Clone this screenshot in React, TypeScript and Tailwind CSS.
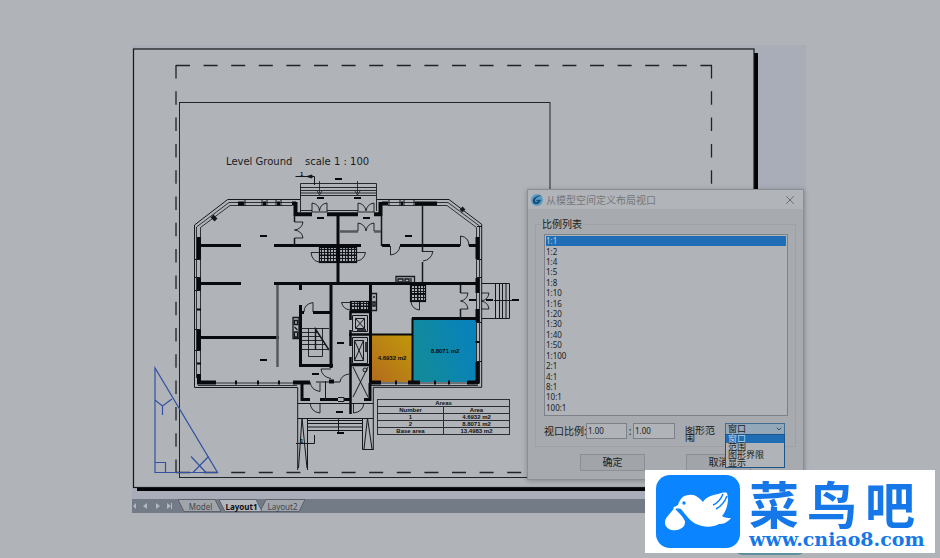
import React, { useState } from 'react';
import { ChevronDown, X } from 'lucide-react';

const SCALES = [
  '1:1', '1:2', '1:4', '1:5', '1:8', '1:10', '1:16', '1:20', '1:30',
  '1:40', '1:50', '1:100', '2:1', '4:1', '8:1', '10:1', '100:1',
];

const EXTENTS = ['窗口', '范围', '图形界限', '显示'];

const AREAS = [
  ['1', '4.6932 m2'],
  ['2', '8.8071 m2'],
  ['Base area', '13.4983 m2'],
];

// room tags, drawn as short bars at this zoom level
const TAGS = [
  [263, 236], [263, 360], [338, 179], [320, 198], [320, 218], [357, 198], [366, 218], [408, 236],
  [472, 300], [489, 300], [515, 300], [340, 343], [315, 374], [339, 412], [340, 433],
];

function Tile({ x, y, w, h }: { x: number; y: number; w: number; h: number }) {
  return (
    <g>
      <rect x={x} y={y} width={w} height={h} fill="url(#tiles)" stroke="#0a0c10" strokeWidth="1.2" />
      <path d={`M${x + w / 2} ${y}v${h}M${x} ${y + h / 2}h${w}`} stroke="#0a0c10" strokeWidth="1" />
    </g>
  );
}

function FloorPlan() {
  return (
    <g fill="none" stroke="#15181c" strokeWidth="1">
      {/* outer outline and window lines */}
      <path d="M300 199.500H227.700L194.500 225V387.500H297.700V470M376.700 199.500H449L481.700 224.300V387.300H373.300V450" />
      <path
        d="M292 202.500H229L196.500 227V378M292 205.500H230L200.500 227.500V378M382 202.500H448L479.500 226V383M388 205.500H447L476.500 227.500V383M198 383H297M198 385.500H297M371 383H478M371 385.500H478"
        stroke="#1e2126"
        strokeWidth="0.9"
      />
      {/* window mullions */}
      <path d="M245 200v6M262 200v6M267 200v6M276 200v6M281 200v6M389 200v6M400 200v6M404 200v6M414 200v6M195 259.500h6M195 277.500h6M195 290.500h6M195 329.500h6M195 350.500h6M477 226.500h5M477 259.500h5M477 277.500h5M477 322.500h5M477 361.500h5" />
      <path d="M212 216l4 4M461 211l3-3" strokeWidth="4" />

      {/* facade walls */}
      <g stroke="#080a0d" strokeWidth="4">
        <path d="M199 237V259M199 278V290M199 330V350M199 374V384" />
        <path d="M238 203.500h6M263 203.500h3M277 203.500h3M382 203.500h6M401 203.500h2M415 203.500h22" />
        <path d="M292 203.500h4M295.500 202V216M294 214.300H312M327 214.300H358M374 214.300H382M380.500 202V216" />
        <path d="M477.500 237V259M477.500 278V293M477.500 309V322M477.500 341V343M477.500 362V384" />
        <path d="M197 382.500H216M235 382.500h2M257 382.500h2M278 382.500h2M293 382.500H310M370 382.500H381M395 382.500h2M408 382.500H420M434 382.500h2M448 382.500h2M467 382.500H478" />
        <path d="M197 309.500h4M197 363.500h4" strokeWidth="2" />
        <path d="M302 383V401M301 399.500H310M320 399.500H338M344 399.500H351M364 399.500H371M370 383V401" strokeWidth="3" />
      </g>

      {/* inner walls */}
      <g stroke="#080a0d" strokeWidth="3">
        <path d="M201 245.500H241M274 245.500H361M382 245.500H390M400 245.500H460M469 245.500H477" />
        <path d="M201 283.500H241M274 283.500H479" />
        <path d="M338 216V284M370.500 284V384M331 284V368M300.500 284V290M300.500 305V366M299 365.500H333" />
        <path d="M201 337.500H279M299 312.500H304M313 312.500H331M412 318.500H478" />
        <path d="M350.500 311V320M350.500 330V346M350.500 357V414M350 312H370M349 334.500H370M350 365H370" strokeWidth="2.500" />
        <path d="M370 334.500H412M412.500 318V384" strokeWidth="2" />
        <path d="M329 381.500h5" strokeWidth="4" />
      </g>
      <path d="M381.500 216V246M422.500 206V252M422.500 262V283M294.500 215V222M294.500 238V246M460.500 285V293M460.500 309V319" strokeWidth="1.500" />
      <path d="M277.500 285V367M340 231.500H358M374 231.500H381" stroke="#55595f" strokeWidth="2.500" />
      <path d="M325.500 381V400M316 382H330M334 382H340M338 397.500h6v4h-6" />

      {/* doors */}
      <g strokeWidth="0.900">
        <path d="M294.500 222H303M303 222Q302 229 294.500 230Q302 231 303 238M303 238H294.500" />
        <path d="M312 212V203Q319 204 319.500 211Q320 204 327 203V212M312 212H327" />
        <path d="M358 212V203Q365 204 366 211Q367 204 374 203V212M358 212H374" />
        <path d="M358 231V223Q365 224 366 231Q367 224 374 223V231" />
        <path d="M390.500 246V255Q399 254 400 246M460.500 246V236Q469 237 469 246M423 251.500H433Q431 260 423 261" />
        <path d="M319 252.500H311Q312 261 319 262M357 252.500H365.500Q364 260 357 261M350 302.500H341.500Q343 309 350 310" />
        <path d="M313 312V302.500Q304 304 304 312M419.500 302V310Q412 309 411 302M331 369H321Q322 377 331 378.500M340 382Q341 375 349 374" />
        <path d="M460.500 293H468Q467 300 460.500 301Q467 302 468 309H460.500M481 293H489Q488 300 481 301Q488 302 489 309H481" />
        <path d="M320 383V391.500Q311 390 310 382M320 403V413Q311 412 310 403M353.500 403V413Q363 412 364 403" />
      </g>

      {/* front and rear steps */}
      <path d="M300.500 212V183.500H376.500V211M300 187.500H376M300 190.500H376M300 193H376M300 195.500H376M300 210.500H312M327 210.500H358" strokeWidth="0.900" />
      <path d="M319.500 181V193M317 191l2.500 4 2.500-4M357.500 181V193M355 191l2.500 4 2.500-4" strokeWidth="0.800" />
      <path d="M482 283.500H509.500V318.500H482M495.500 284V318M499.500 284V318M502.500 284V318M506 284V318M494 300.500H512" />
      <path d="M297.500 403.500H373M297.500 418.500H373M308 420.500H362M308 423.500H362M308 427H362M308 430.500H362M338.500 418V433" />
      <path d="M307.500 418V470M302 418L298.500 468M302 418L307 468M362.500 418V449.500H373.500M367.500 418L364 449M367.500 418L372 449" />
      <path d="M295.500 176.500H314.500V185M305 176.500h7M296 443.500H314.500V435" />
      <path d="M307 176.500l5-1.500v3z" fill="#15181c" />

      {/* staircase */}
      <path d="M301 328.500H329M301 332.500H318M301 336.500H320M301 340.500H323M301 344.500H326M301 349.500H329M308.500 328V356.500H322.500V328" strokeWidth="0.900" />
      <path d="M315.500 328V350L315.500 329L329 350" strokeWidth="1.400" />

      {/* lifts */}
      <path d="M352.500 315.500h15v16h-15zM355.500 318.500h9v10h-9zM355.500 318.500l9 10M364.500 318.500l-9 10M352.500 337.500h15v26h-15zM354.500 340.500h9v20h-9zM354.500 340.500l9 20M363.500 340.500l-9 20M353 367l15 30M368 367l-15 30" />
      <circle cx="365" cy="370" r="2" />
      <path d="M366 342v10M357 330h9" stroke="#30343a" strokeWidth="2" />

      {/* kitchens and bathrooms */}
      <Tile x={319.500} y={247.500} w={17} h={15} />
      <Tile x={339.500} y={247.500} w={17} h={15} />
      <Tile x={410.500} y={285.500} w={15} h={16} />
      <Tile x={350.500} y={301.500} w={18} h={9} />
      <path d="M396 283V276.500H414.500V283M398 279h5v3h-5zM405 279h4v3h-4zM411 278v4M371.500 293.500h5v17h-5zM373 297h2M373 302h2v4h-2zM293 317.500h6v21h-6zM294.500 320.500h3v4h-3zM294.500 327l3 3M294.500 332h3v5h-3z" strokeWidth="1.300" />

      {TAGS.map(([x, y]) => (
        <path key={`${x}-${y}`} d={`M${x - 3} ${y}h7`} stroke="#080a0d" strokeWidth="2" />
      ))}
    </g>
  );
}

function PaperSheet() {
  return (
    <svg viewBox="132 45 674 454" className="block h-auto w-full" role="img" aria-label="Level Ground">
      <defs>
        <linearGradient id="amber" x1="0" y1="1" x2="1" y2="0">
          <stop offset="0" stopColor="#b36a1d" />
          <stop offset="1" stopColor="#c0990a" />
        </linearGradient>
        <linearGradient id="cyan" x1="0" y1="0.300" x2="1" y2="0">
          <stop offset="0" stopColor="#128a9c" />
          <stop offset="1" stopColor="#0681bf" />
        </linearGradient>
        <pattern id="tiles" width="3" height="3" patternUnits="userSpaceOnUse">
          <path d="M0 0.500H3M0.500 0V3" stroke="#15181c" strokeWidth="1.100" />
        </pattern>
      </defs>

      <rect x="132" y="45" width="674" height="454" fill="#a9adb8" />
      <path d="M754 53H758V491H137V488H754z" fill="#020306" />
      <rect x="133.500" y="49" width="620.500" height="438.500" fill="#b0b4b9" stroke="#16181c" strokeWidth="1.200" />

      <g fill="none" stroke="#202327">
        <path d="M176 65.500H712M176 472.500H712" strokeDasharray="14 13.600" strokeWidth="1.300" />
        <path d="M176 65V472M711.500 65V472" strokeDasharray="13.500 12.800" strokeWidth="1.300" />
        <rect x="179.500" y="102.500" width="370.500" height="375" />
      </g>

      <g fill="none" stroke="#3351a3" strokeWidth="1.200">
        <path d="M155 368V472.500H217.500zM155 462.500H165.500V472.500" />
        <path d="M155 400L162.500 406L172 399M162.500 406V415M191 456.500L206 472.500M208.500 456.500L193 472.500" />
      </g>

      <rect x="371" y="335" width="42" height="47" fill="url(#amber)" />
      <rect x="413" y="319" width="63" height="63" fill="url(#cyan)" />
      <FloorPlan />

      <g fill="#1a1c22" fontFamily="'DejaVu Sans', sans-serif" fontSize="10">
        <text x="226" y="165">Level Ground</text>
        <text x="305" y="165">scale 1 : 100</text>
      </g>
      <g fill="#0a0c10" fontFamily="'Liberation Sans', sans-serif" fontSize="6" fontWeight="700">
        <text x="392" y="360" textAnchor="middle">4.6932 m2</text>
        <text x="445" y="353" textAnchor="middle">8.8071 m2</text>
        <text x="300" y="176">1</text>
        <text x="300" y="443">1</text>
      </g>
    </svg>
  );
}

function AreaTable() {
  return (
    <table className="absolute left-[245px] top-[354px] w-[133px] table-fixed border-collapse text-center font-['Liberation_Sans',sans-serif] text-[6px] font-bold leading-[6px] text-[#0f1115] [&_td]:border [&_td]:border-[#2b2e33] [&_td]:p-0 [&_th]:border [&_th]:border-[#2b2e33] [&_th]:p-0">
      <thead>
        <tr><th colSpan={2}>Areas</th></tr>
        <tr><th>Number</th><th>Area</th></tr>
      </thead>
      <tbody>
        {AREAS.map(([name, area]) => (
          <tr key={name}><td>{name}</td><td>{area}</td></tr>
        ))}
      </tbody>
    </table>
  );
}

function LayoutTabs() {
  const [active, setActive] = useState('Layout1');

  return (
    <nav className="flex h-[14px] items-stretch bg-[#737b87] font-['Noto_Sans',sans-serif] text-[8px] leading-[13px]">
      <svg width="46" height="14" viewBox="0 0 46 14" fill="#b4b9c1" className="shrink-0" aria-hidden="true">
        <path d="M4 4v6L1 7zM15 4v6l-4-3zM24 4v6l4-3zM35 4v6l4-3zM39 4h1v6h-1z" />
      </svg>
      {['Model', 'Layout1', 'Layout2'].map((tab) => (
        <button
          key={tab}
          onClick={() => setActive(tab)}
          className={`relative -mr-1 flex w-[45px] items-center justify-center ${active === tab ? 'z-10 font-bold text-[#0c0e12]' : 'text-[#42474f]'}`}
        >
          <svg viewBox="0 0 45 14" preserveAspectRatio="none" className="absolute inset-0 h-full w-full" aria-hidden="true">
            <path
              d={tab === 'Layout2' ? 'M6 0.500H45L39 12.500H0z' : 'M0 0.500H37L43 12.500H6z'}
              fill={active === tab ? '#b3b7bd' : '#a0a5ac'}
              stroke="#52575f"
              strokeWidth="0.800"
            />
          </svg>
          <span className="relative">{tab}</span>
        </button>
      ))}
    </nav>
  );
}

function ViewportDialog() {
  const [scale, setScale] = useState('1:1');
  const [extent, setExtent] = useState('窗口');

  return (
    <div
      role="dialog"
      aria-labelledby="dialog-title"
      className="absolute right-[2px] top-[144px] w-[277px] border border-[#8b8f95] bg-[#a7aaaf] font-['Noto_Sans','Noto_Sans_CJK_SC',sans-serif] text-[10px] text-[#1b1d21] shadow-[0_1px_5px_rgba(0,0,0,0.25)]"
    >
      <header className="flex h-[19px] items-center bg-[#b1b4b8] pl-[3px] pr-[6px]">
        <svg width="12" height="12" viewBox="0 0 12 12" aria-hidden="true">
          <circle cx="6" cy="6" r="6" fill="#5b9cc0" />
          <path d="M10.500 1.500C6 1 2 3.500 1.800 6.800c-.2 2.800 2.400 3.800 4.700 3.200C8.500 9.400 9.600 7.600 10 5.800H5.600L5 7.200h2.400C6.500 8.600 4 8.700 4 6.600 4 4.200 7 2.600 10.500 1.500z" fill="#124b7c" />
        </svg>
        <h2 id="dialog-title" className="ml-[3px] leading-[14px] text-[#74777c]">从模型空间定义布局视口</h2>
        <button aria-label="关闭" className="ml-auto text-[#606368]">
          <X size={14} strokeWidth={1.5} />
        </button>
      </header>

      <div className="px-[7px] pb-2 pt-2">
        <fieldset className="border border-[#9da0a5] px-[5px] pb-[7px]">
          <legend className="px-px leading-[14px]">比例列表</legend>

          <ul
            role="listbox"
            aria-label="比例列表"
            className="ml-[3px] mr-[2px] mt-[3px] grid h-[182px] auto-rows-fr border border-[#7b8089] bg-[#b0b3b8] px-px pb-[2px] pt-px text-[8px] leading-[10px]"
          >
            {SCALES.map((s) => (
              <li
                key={s}
                role="option"
                aria-selected={s === scale}
                onClick={() => setScale(s)}
                className={`flex items-center ${s === scale ? 'bg-[#1f6db5] text-[#b9d3ea]' : ''}`}
              >
                {s}
              </li>
            ))}
          </ul>

          <div className="ml-[3px] mr-[5px] mt-[7px] flex h-4">
            <label htmlFor="ratio-a" className="w-[42px] shrink-0 whitespace-nowrap leading-4">视口比例:</label>
            <input id="ratio-a" defaultValue="1.00" className="w-[41px] border border-[#7b8089] bg-[#b0b3b8] px-px text-[8px]" />
            <label htmlFor="ratio-b" className="w-[6px] shrink-0 text-center leading-4">:</label>
            <input id="ratio-b" defaultValue="1.00" className="w-[42px] border border-[#7b8089] bg-[#b0b3b8] px-px text-[8px]" />
            <label htmlFor="extent" className="ml-[10px] mt-[3px] h-4 w-8 shrink-0 overflow-hidden leading-[9px]">图形范围</label>
            <div className="relative ml-auto w-[60px] text-[9px]">
              <select
                id="extent"
                value={extent}
                onChange={(e) => setExtent(e.target.value)}
                className="block h-3 w-full appearance-none border border-[#3f6f96] bg-[#93a9b9] pl-[2px] leading-[10px]"
              >
                {EXTENTS.map((name) => <option key={name}>{name}</option>)}
              </select>
              <ChevronDown size={8} className="pointer-events-none absolute right-[2px] top-[2px]" />
              <ul className="absolute left-0 top-[11px] z-10 w-full border border-[#1d5588] bg-[#b0b3b8] leading-[8px]">
                {EXTENTS.map((name) => (
                  <li
                    key={name}
                    onClick={() => setExtent(name)}
                    className={`h-2 pl-[2px] ${name === extent ? 'bg-[#1f6db5] text-[#b9d3ea]' : ''}`}
                  >
                    {name}
                  </li>
                ))}
              </ul>
            </div>
          </div>
        </fieldset>

        <div className="mt-[7px] flex justify-center gap-[41px]">
          <button className="h-[17px] w-[65px] border border-[#8b8f95] bg-[#a1a4a9] leading-[15px]">确定</button>
          <button className="h-[17px] w-[65px] border border-[#8b8f95] bg-[#a1a4a9] leading-[15px]">取消</button>
        </div>
      </div>
    </div>
  );
}

function SiteBadge() {
  return (
    <a
      href="#"
      className="absolute bottom-[5px] right-[5px] flex h-[83px] w-[290px] items-center gap-[9px] bg-white pl-[11px] text-[#1678e8]"
    >
      <svg width="84" height="73" viewBox="0 0 84 73" className="shrink-0" aria-hidden="true">
        <rect width="84" height="73" rx="14" fill="#0a84ff" />
        <g fill="#fff">
          <path d="M17 33C19 31 21 31 22 30C24 24 27 20 33 20C39 19 43 23 47 27C50 22 56 20 62 19C65 18 69 17 71 18C73 24 72 34 66 41C69 43 72 43 75 43C71 48 67 49 63 49C56 53 47 52 40 49C34 46 30 40 25 34C22 33 20 34 17 33z" />
          <path d="M18 33C15 39 8 42 9 49C11 56 22 58 28 51C31 45 27 41 24 38C22 36 21 34 20 33z" />
        </g>
        <circle cx="28" cy="28" r="1.700" fill="#0a84ff" />
        <path d="M20 34C24 38 29 42 30 47M57 30C62 28 65 24 67 19M60 34C66 31 69 26 71 21" stroke="#0a84ff" strokeWidth="1.500" fill="none" />
      </svg>
      <span className="flex flex-col">
        <span className="flex gap-2 font-['Noto_Sans_CJK_SC',sans-serif] text-[50px] font-bold leading-[54px]">
          <span>菜</span><span>鸟</span><span>吧</span>
        </span>
        <span className="font-['DejaVu_Serif',serif] text-[19px] font-bold leading-5">www.cniao8.com</span>
      </span>
    </a>
  );
}

export default function App() {
  return (
    <main className="relative min-h-screen overflow-hidden bg-[#b0b3b8] pr-0.5 pt-[45px]">
      <section className="relative mx-auto w-full max-w-[674px]">
        <PaperSheet />
        <AreaTable />
        <LayoutTabs />
        <ViewportDialog />
      </section>
      <div className="absolute bottom-[3px] right-[136px] h-3 w-[68px] rounded-full bg-[#5d8f9c]" />
      <SiteBadge />
    </main>
  );
}
